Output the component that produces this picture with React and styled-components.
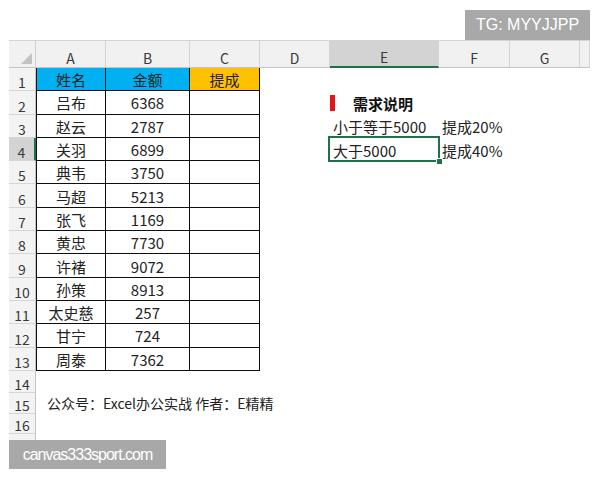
import React from 'react'
import styled, { createGlobalStyle } from 'styled-components'

const GlobalStyle = createGlobalStyle`
  html, body {
    margin: 0;
    padding: 0;
    background: #ffffff;
  }
  body {
    font-family: "Noto Sans CJK SC", "Liberation Sans", sans-serif;
    color: #222;
  }
`

const Page = styled.div`
  position: relative;
  width: 600px;
  height: 480px;
  overflow: hidden;
  background: #fff;
  padding-top: 40px;
  padding-left: 9px;
  box-sizing: border-box;
`

const Sheet = styled.div`
  display: grid;
  width: 581px;
  grid-template-columns: 27px 70px 84px 70px 70px 109px 71px 70px 10px;
  grid-template-rows: 27px repeat(13, 23.3px) 22px 21px 20px 7px;
  border-top: 1px solid #d4d4d4;
  font-size: 15px;
`

const Corner = styled.div`
  position: relative;
  background: #f1f1f1;
  border-right: 1px solid #d0d0d0;
  border-bottom: 1px solid #c4c4c4;
  box-sizing: border-box;
  &::after {
    content: '';
    position: absolute;
    right: 3px;
    bottom: 3px;
    width: 0;
    height: 0;
    border-left: 11px solid transparent;
    border-bottom: 11px solid #c2c2c2;
  }
`

const ColHeader = styled.div`
  display: flex;
  align-items: flex-end;
  justify-content: center;
  padding-bottom: 1px;
  box-sizing: border-box;
  font-size: 14px;
  line-height: 1.1;
  color: #3a3a3a;
  background: ${({ $active }) => ($active ? '#d3d3d3' : '#f1f1f1')};
  border-right: 1px solid #d4d4d4;
  border-bottom: ${({ $active }) => ($active ? '2px solid #21704a' : '1px solid #c4c4c4')};
`

const RowHeader = styled.div`
  display: flex;
  align-items: flex-end;
  justify-content: center;
  padding-bottom: 1px;
  box-sizing: border-box;
  font-size: 14px;
  line-height: 1;
  color: #3a3a3a;
  background: ${({ $active }) => ($active ? '#d3d3d3' : '#f3f3f3')};
  border-bottom: 1px solid #d6d6d6;
  border-right: ${({ $active }) => ($active ? '2px solid #21704a' : '1px solid #c4c4c4')};
`

const Cell = styled.div`
  position: relative;
  display: flex;
  align-items: center;
  justify-content: ${({ $center }) => ($center ? 'center' : 'flex-start')};
  padding: 1px 3px 0;
  box-sizing: border-box;
  white-space: nowrap;
  background: ${({ $bg }) => $bg || 'transparent'};
  border-right: ${({ $table }) => ($table ? '1px solid #0e0e0e' : 'none')};
  border-bottom: ${({ $table }) => ($table ? '1px solid #0e0e0e' : 'none')};
  border-left: ${({ $first }) => ($first ? '1px solid #0e0e0e' : 'none')};
`

const SelectedCell = styled(Cell)`
  &::before {
    content: '';
    position: absolute;
    left: -2px;
    top: -2px;
    right: -1px;
    bottom: -1px;
    border: 2px solid #21704a;
  }
  &::after {
    content: '';
    position: absolute;
    right: -4px;
    bottom: -4px;
    width: 5px;
    height: 5px;
    background: #21704a;
    border: 1px solid #fff;
  }
`

const Title = styled.div`
  display: flex;
  align-items: center;
  gap: 18px;
  margin-left: -3px;
  font-weight: 700;
  font-size: 15px;
  color: #111;
`

const RedBar = styled.span`
  width: 5px;
  height: 16px;
  background: #e0161c;
`

const Note = styled.div`
  grid-column: 2 / span 8;
  display: flex;
  align-items: center;
  padding-left: 11px;
  font-size: 14px;
  color: #222;
  white-space: nowrap;
`

const Mark = styled.div`
  position: absolute;
  display: flex;
  align-items: center;
  justify-content: center;
  background: #a8a8a8;
  color: #fff;
  font-family: "Liberation Sans", Arial, sans-serif;
`

const TopMark = styled(Mark)`
  right: 10px;
  top: 10px;
  width: 125px;
  height: 30px;
  font-size: 16px;
`

const BottomMark = styled(Mark)`
  left: 9px;
  top: 440px;
  width: 157px;
  height: 29px;
  font-size: 16px;
  letter-spacing: -1px;
`

const columns = ['A', 'B', 'C', 'D', 'E', 'F', 'G', '']

const people = [
  ['吕布', '6368'],
  ['赵云', '2787'],
  ['关羽', '6899'],
  ['典韦', '3750'],
  ['马超', '5213'],
  ['张飞', '1169'],
  ['黄忠', '7730'],
  ['许褚', '9072'],
  ['孙策', '8913'],
  ['太史慈', '257'],
  ['甘宁', '724'],
  ['周泰', '7362'],
]

// what sits in columns D..H for a given row
const sideCells = (row) => {
  if (row === 2) {
    return [
      <Cell key="d" />,
      <Cell key="e">
        <Title>
          <RedBar />
          需求说明
        </Title>
      </Cell>,
      <Cell key="f" />,
      <Cell key="g" />,
      <Cell key="h" />,
    ]
  }
  if (row === 3) {
    return [
      <Cell key="d" />,
      <Cell key="e">小于等于5000</Cell>,
      <Cell key="f">提成20%</Cell>,
      <Cell key="g" />,
      <Cell key="h" />,
    ]
  }
  if (row === 4) {
    return [
      <Cell key="d" />,
      <SelectedCell key="e">大于5000</SelectedCell>,
      <Cell key="f">提成40%</Cell>,
      <Cell key="g" />,
      <Cell key="h" />,
    ]
  }
  return ['d', 'e', 'f', 'g', 'h'].map((k) => <Cell key={k} />)
}

const App = () => {
  return (
    <>
      <GlobalStyle />
      <Page>
        <Sheet>
          <Corner />
          {columns.map((c, i) => (
            <ColHeader key={i} $active={c === 'E'}>{c}</ColHeader>
          ))}

          <RowHeader>1</RowHeader>
          <Cell $table $first $center $bg="#00b0f0">姓名</Cell>
          <Cell $table $center $bg="#00b0f0">金额</Cell>
          <Cell $table $center $bg="#ffc000">提成</Cell>
          {sideCells(1)}

          {people.map(([name, amount], i) => (
            <React.Fragment key={name}>
              <RowHeader $active={i + 2 === 4}>{i + 2}</RowHeader>
              <Cell $table $first $center>{name}</Cell>
              <Cell $table $center>{amount}</Cell>
              <Cell $table />
              {sideCells(i + 2)}
            </React.Fragment>
          ))}

          <RowHeader>14</RowHeader>
          <Note />
          <RowHeader>15</RowHeader>
          <Note>公众号：Excel办公实战 作者：E精精</Note>
          <RowHeader>16</RowHeader>
          <Note />
          <RowHeader />
          <Note />
        </Sheet>

        <TopMark>TG: MYYJJPP</TopMark>
        <BottomMark>canvas333sport.com</BottomMark>
      </Page>
    </>
  )
}

export default App
